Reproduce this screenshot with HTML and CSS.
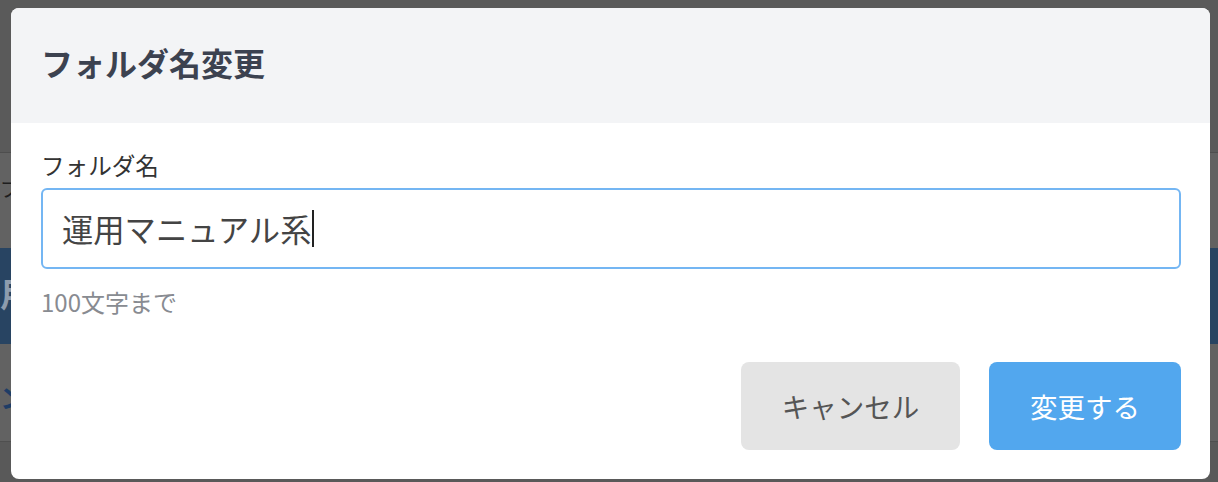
FILE: index.html
```html
<!DOCTYPE html>
<html lang="ja">
<head>
<meta charset="utf-8">
<title>フォルダ名変更</title>
<link rel="stylesheet" href="styles.css">
</head>
<body>
<div class="page">
  <div class="pg-top"></div>
  <div class="pg-sub"><span class="pg-text">ブ</span></div>
  <div class="pg-band"><span class="pg-band-text">用</span></div>
  <div class="pg-mid"><span class="pg-blue">ン</span></div>
  <div class="pg-bottom"></div>
</div>
<div class="modal" role="dialog" aria-labelledby="modal-title">
  <div class="modal-header">
    <h2 class="modal-title" id="modal-title">フォルダ名変更</h2>
  </div>
  <div class="modal-body">
    <label class="field-label">フォルダ名</label>
    <div class="text-input" role="textbox">運用マニュアル系<span class="caret"></span></div>
    <p class="hint">100文字まで</p>
    <div class="actions">
      <button class="btn btn-cancel">キャンセル</button>
      <button class="btn btn-primary">変更する</button>
    </div>
  </div>
</div>
</body>
</html>
```
FILE: styles.css
```css
* { box-sizing: border-box; }

html, body {
  margin: 0;
  padding: 0;
}

body {
  width: 1218px;
  height: 482px;
  overflow: hidden;
  position: relative;
  background: #5a5a5a;
  font-family: "Noto Sans CJK JP", "Noto Sans", sans-serif;
}

.page {
  display: flex;
  flex-direction: column;
  height: 482px;
}

.pg-top {
  height: 153px;
  background: #5a5a5a;
  border-bottom: 1px solid #4e4e4e;
}

.pg-sub {
  height: 95px;
  background: #626262;
  position: relative;
}

.pg-text {
  position: absolute;
  left: 0;
  top: 26px;
  font-size: 20px;
  line-height: 1;
  color: #1e1e1e;
}

.pg-band {
  height: 96px;
  background: #284462;
  position: relative;
}

.pg-band-text {
  position: absolute;
  left: 0;
  top: 28px;
  font-size: 34px;
  line-height: 1;
  font-weight: 700;
  color: #8d9cae;
}

.pg-mid {
  height: 98px;
  background: #626262;
  border-bottom: 1px solid #4f4f4f;
  position: relative;
}

.pg-blue {
  position: absolute;
  left: 0;
  top: 40px;
  font-size: 26px;
  line-height: 1;
  font-weight: 700;
  color: #1f3d66;
}

.pg-bottom {
  flex: 1;
  background: #595959;
}

.modal {
  position: absolute;
  left: 11px;
  top: 8px;
  width: 1199px;
  height: 471px;
  background: #ffffff;
  border-radius: 8px;
  overflow: hidden;
  display: flex;
  flex-direction: column;
}

.modal-header {
  height: 115px;
  background: #f3f4f6;
  display: flex;
  align-items: center;
  padding: 0 30px 8px;
}

.modal-title {
  margin: 0;
  font-size: 32px;
  font-weight: 700;
  color: #3c4250;
  line-height: 1;
}

.modal-body {
  padding: 27px 29px 29px 30px;
  display: flex;
  flex-direction: column;
}

.field-label {
  font-size: 23.6px;
  line-height: 30px;
  color: #333333;
  margin-bottom: 8px;
}

.text-input {
  height: 81px;
  border: 2px solid #74b6f3;
  border-radius: 6px;
  padding: 0 19px;
  display: flex;
  align-items: center;
  font-size: 31.3px;
  color: #444444;
}

.caret {
  display: inline-block;
  width: 1.5px;
  height: 37px;
  background: #222222;
  margin-left: 1px;
}

.hint {
  margin: 18px 0 0;
  font-size: 24px;
  line-height: 30px;
  color: #888b91;
}

.actions {
  margin-top: 45px;
  display: flex;
  justify-content: flex-end;
  gap: 29px;
}

.btn {
  height: 88px;
  padding: 0;
  border: none;
  border-radius: 8px;
  font-family: inherit;
  font-size: 27.5px;
  cursor: pointer;
  text-align: center;
}

.btn-cancel {
  width: 219px;
  background: #e4e4e4;
  color: #555555;
}

.btn-primary {
  width: 192px;
  background: #52a7ee;
  color: #ffffff;
}
```
